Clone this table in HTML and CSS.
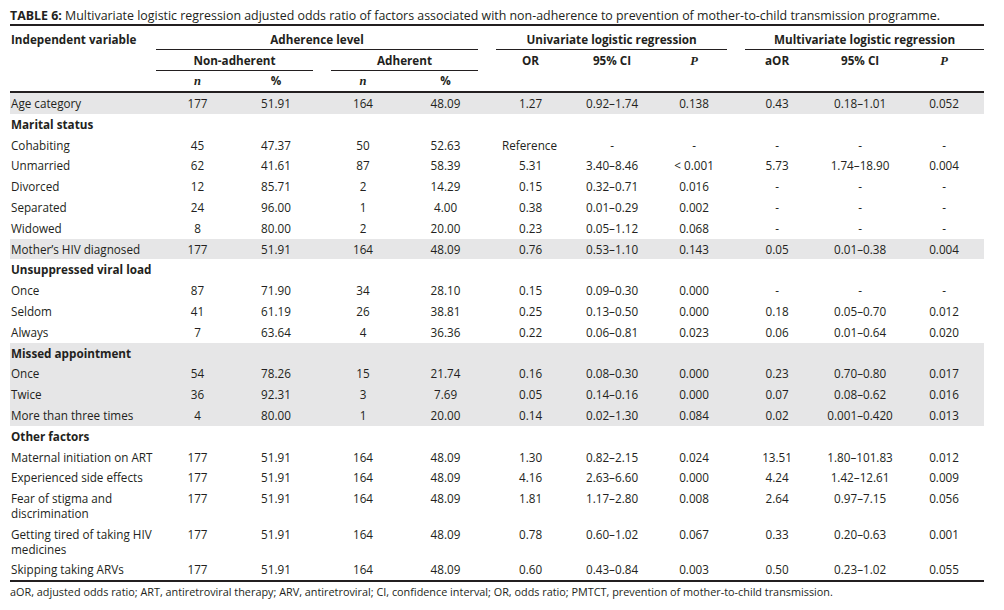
FILE: index.html
```html
<!DOCTYPE html>
<html lang="en">
<head>
<meta charset="utf-8">
<title>Table 6</title>
<link rel="stylesheet" href="styles.css">
</head>
<body>
<div class="page">
  <p class="caption"><b>TABLE 6:</b> Multivariate logistic regression adjusted odds ratio of factors associated with non-adherence to prevention of mother-to-child transmission programme.</p>
  <table class="tbl">
    <colgroup>
      <col class="c-var"><col class="c-n1"><col class="c-p1"><col class="c-n2"><col class="c-p2">
      <col class="c-or"><col class="c-ci"><col class="c-pv"><col class="c-aor"><col class="c-ci2"><col class="c-pv2">
    </colgroup>
    <thead>
      <tr class="first-head">
        <th class="lead">Independent variable</th>
        <th colspan="4"><div class="ul ul-adh">Adherence level</div></th>
        <th colspan="3"><div class="ul ul-uni">Univariate logistic regression</div></th>
        <th colspan="3"><div class="ul ul-multi">Multivariate logistic regression</div></th>
      </tr>
      <tr>
        <th></th>
        <th colspan="2"><div class="ul ul-non">Non-adherent</div></th>
        <th colspan="2"><div class="ul ul-ad">Adherent</div></th>
        <th><div class="plain">OR</div></th>
        <th><div class="plain">95% CI</div></th>
        <th><div class="plain"><span class="it">P</span></div></th>
        <th><div class="plain">aOR</div></th>
        <th><div class="plain">95% CI</div></th>
        <th><div class="plain"><span class="it">P</span></div></th>
      </tr>
      <tr class="last-head">
        <th></th>
        <th><span class="it">n</span></th>
        <th>%</th>
        <th><span class="it">n</span></th>
        <th>%</th>
        <th></th><th></th><th></th><th></th><th></th><th></th>
      </tr>
    </thead>
    <tbody>
      <tr class="shade"><td>Age category</td><td>177</td><td>51.91</td><td>164</td><td>48.09</td><td>1.27</td><td>0.92–1.74</td><td>0.138</td><td>0.43</td><td>0.18–1.01</td><td>0.052</td></tr>
      <tr class="group"><td>Marital status</td><td></td><td></td><td></td><td></td><td></td><td></td><td></td><td></td><td></td><td></td></tr>
      <tr><td>Cohabiting</td><td>45</td><td>47.37</td><td>50</td><td>52.63</td><td class="ref">Reference</td><td>-</td><td>-</td><td>-</td><td>-</td><td>-</td></tr>
      <tr><td>Unmarried</td><td>62</td><td>41.61</td><td>87</td><td>58.39</td><td>5.31</td><td>3.40–8.46</td><td>&lt; 0.001</td><td>5.73</td><td>1.74–18.90</td><td>0.004</td></tr>
      <tr><td>Divorced</td><td>12</td><td>85.71</td><td>2</td><td>14.29</td><td>0.15</td><td>0.32–0.71</td><td>0.016</td><td>-</td><td>-</td><td>-</td></tr>
      <tr><td>Separated</td><td>24</td><td>96.00</td><td>1</td><td>4.00</td><td>0.38</td><td>0.01–0.29</td><td>0.002</td><td>-</td><td>-</td><td>-</td></tr>
      <tr><td>Widowed</td><td>8</td><td>80.00</td><td>2</td><td>20.00</td><td>0.23</td><td>0.05–1.12</td><td>0.068</td><td>-</td><td>-</td><td>-</td></tr>
      <tr class="shade"><td>Mother’s HIV diagnosed</td><td>177</td><td>51.91</td><td>164</td><td>48.09</td><td>0.76</td><td>0.53–1.10</td><td>0.143</td><td>0.05</td><td>0.01–0.38</td><td>0.004</td></tr>
      <tr class="group"><td>Unsuppressed viral load</td><td></td><td></td><td></td><td></td><td></td><td></td><td></td><td></td><td></td><td></td></tr>
      <tr><td>Once</td><td>87</td><td>71.90</td><td>34</td><td>28.10</td><td>0.15</td><td>0.09–0.30</td><td>0.000</td><td>-</td><td>-</td><td>-</td></tr>
      <tr><td>Seldom</td><td>41</td><td>61.19</td><td>26</td><td>38.81</td><td>0.25</td><td>0.13–0.50</td><td>0.000</td><td>0.18</td><td>0.05–0.70</td><td>0.012</td></tr>
      <tr><td>Always</td><td>7</td><td>63.64</td><td>4</td><td>36.36</td><td>0.22</td><td>0.06–0.81</td><td>0.023</td><td>0.06</td><td>0.01–0.64</td><td>0.020</td></tr>
      <tr class="shade group"><td>Missed appointment</td><td></td><td></td><td></td><td></td><td></td><td></td><td></td><td></td><td></td><td></td></tr>
      <tr class="shade"><td>Once</td><td>54</td><td>78.26</td><td>15</td><td>21.74</td><td>0.16</td><td>0.08–0.30</td><td>0.000</td><td>0.23</td><td>0.70–0.80</td><td>0.017</td></tr>
      <tr class="shade"><td>Twice</td><td>36</td><td>92.31</td><td>3</td><td>7.69</td><td>0.05</td><td>0.14–0.16</td><td>0.000</td><td>0.07</td><td>0.08–0.62</td><td>0.016</td></tr>
      <tr class="shade"><td>More than three times</td><td>4</td><td>80.00</td><td>1</td><td>20.00</td><td>0.14</td><td>0.02–1.30</td><td>0.084</td><td>0.02</td><td>0.001–0.420</td><td>0.013</td></tr>
      <tr class="group"><td>Other factors</td><td></td><td></td><td></td><td></td><td></td><td></td><td></td><td></td><td></td><td></td></tr>
      <tr><td>Maternal initiation on ART</td><td>177</td><td>51.91</td><td>164</td><td>48.09</td><td>1.30</td><td>0.82–2.15</td><td>0.024</td><td>13.51</td><td>1.80–101.83</td><td>0.012</td></tr>
      <tr><td>Experienced side effects</td><td>177</td><td>51.91</td><td>164</td><td>48.09</td><td>4.16</td><td>2.63–6.60</td><td>0.000</td><td>4.24</td><td>1.42–12.61</td><td>0.009</td></tr>
      <tr><td>Fear of stigma and discrimination</td><td>177</td><td>51.91</td><td>164</td><td>48.09</td><td>1.81</td><td>1.17–2.80</td><td>0.008</td><td>2.64</td><td>0.97–7.15</td><td>0.056</td></tr>
      <tr><td>Getting tired of taking HIV medicines</td><td>177</td><td>51.91</td><td>164</td><td>48.09</td><td>0.78</td><td>0.60–1.02</td><td>0.067</td><td>0.33</td><td>0.20–0.63</td><td>0.001</td></tr>
      <tr class="final"><td>Skipping taking ARVs</td><td>177</td><td>51.91</td><td>164</td><td>48.09</td><td>0.60</td><td>0.43–0.84</td><td>0.003</td><td>0.50</td><td>0.23–1.02</td><td>0.055</td></tr>
    </tbody>
  </table>
  <p class="note">aOR, adjusted odds ratio; ART, antiretroviral therapy; ARV, antiretroviral; CI, confidence interval; OR, odds ratio; PMTCT, prevention of mother-to-child transmission.</p>
</div>
</body>
</html>
```

FILE: styles.css
```css
html, body {
  margin: 0;
  padding: 0;
  background: #ffffff;
}

body {
  font-family: "Open Sans", "Liberation Sans", sans-serif;
  font-size: 11.7px;
  color: #231f20;
}

.page {
  width: 974px;
  padding: 0 10px;
}

.caption {
  margin: 0;
  padding-top: 8px;
  font-size: 12.4px;
  line-height: 15px;
  border-bottom: 2px solid #231f20;
  padding-bottom: 1px;
  white-space: nowrap;
}

.caption b {
  font-weight: 700;
}

.tbl {
  width: 974px;
  border-collapse: collapse;
  table-layout: fixed;
}

.c-var { width: 155px; }
.c-n1 { width: 65px; }
.c-p1 { width: 92px; }
.c-n2 { width: 82px; }
.c-p2 { width: 83px; }
.c-or { width: 87px; }
.c-ci { width: 76px; }
.c-pv { width: 88px; }
.c-aor { width: 78px; }
.c-ci2 { width: 88px; }
.c-pv2 { width: 80px; }

.tbl th {
  padding: 0;
  font-weight: 700;
  text-align: center;
  line-height: 20px;
  vertical-align: top;
}

.first-head th {
  padding-top: 3px;
}

.tbl th.lead {
  text-align: left;
  padding-left: 1px;
}

.ul {
  border-bottom: 1px solid #231f20;
  line-height: 20px;
}

.plain {
  line-height: 20px;
}

.ul-adh { margin: 0 9px 0 -9px; }
.ul-uni { margin: 0 11px 0 9px; }
.ul-multi { margin: 0 0 0 7px; }
.ul-non { margin: 0 9px 0 -9px; }
.ul-ad { margin: 0 9px 0 9px; }

.last-head th {
  border-bottom: 2px solid #231f20;
  line-height: 19px;
}

.it {
  font-family: "Liberation Serif", "DejaVu Serif", serif;
  font-style: italic;
  font-weight: 700;
  font-size: 12.5px;
}

.tbl td {
  padding: 3px 0;
  line-height: 14.8px;
  text-align: center;
  vertical-align: top;
}

.tbl td:first-child {
  text-align: left;
  padding-left: 1px;
  padding-right: 2px;
}

.tbl td.ref {
  text-align: left;
  padding-left: 15px;
}

.shade td {
  background: #e6e6e7;
}

.group td:first-child {
  font-weight: 700;
}

.final td {
  border-bottom: 2px solid #231f20;
}

.note {
  margin: 0;
  padding-top: 3px;
  font-size: 10.85px;
  line-height: 14px;
}
```
